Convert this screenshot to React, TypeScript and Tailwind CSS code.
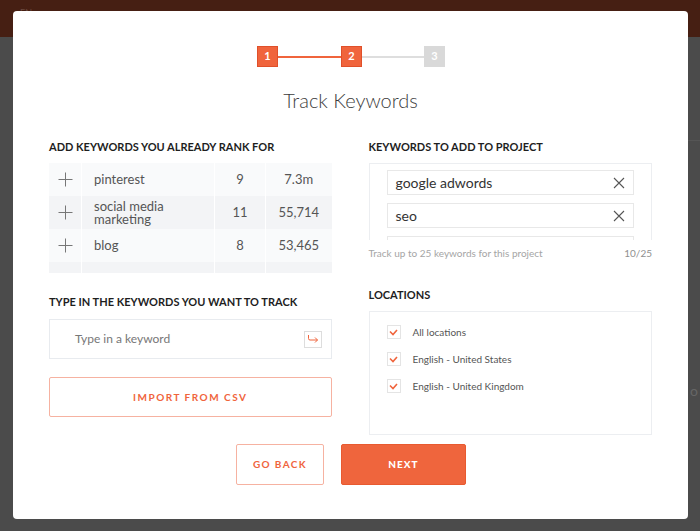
import React from 'react';

const rows = [
  { kw: 'pinterest', rank: '9', vol: '7.3m' },
  { kw: 'social media marketing', rank: '11', vol: '55,714' },
  { kw: 'blog', rank: '8', vol: '53,465' },
];

const PlusIcon = () => (
  <svg width="15" height="15" viewBox="0 0 15 15" className="text-[#777]">
    <path d="M7.5 0.5v14M0.5 7.5h14" stroke="currentColor" strokeWidth="1" fill="none" />
  </svg>
);

const CloseIcon = () => (
  <svg width="12" height="12" viewBox="0 0 12 12" className="text-[#555]">
    <path d="M1 1l10 10M11 1L1 11" stroke="currentColor" strokeWidth="1.1" fill="none" />
  </svg>
);

const Check = () => (
  <span className="w-[14px] h-[14px] border border-[#e4e4e4] flex items-center justify-center bg-white">
    <svg width="9" height="7" viewBox="0 0 9 7">
      <path d="M1 2.5l3 3 4-4.5" stroke="#f0643c" strokeWidth="1.6" fill="none" />
    </svg>
  </span>
);

const Heading = ({ children }: { children: React.ReactNode }) => (
  <h3 className="text-[11px] font-bold text-[#1e1e1e] uppercase leading-[12px]">{children}</h3>
);

export default function App() {
  return (
    <div className="relative w-[700px] h-[531px] overflow-hidden bg-[#4b4b4b] font-['Lato','Liberation_Sans',sans-serif]">
      {/* page behind the modal */}
      <div className="h-[37px] bg-[#461f13]" />
      <div className="absolute left-[20px] top-[6px] text-[9px] text-[#6b4a40]">EN</div>
      <div className="absolute left-[688px] top-[140px] w-[12px] h-px bg-[#555]" />
      <div className="absolute left-[690px] top-[380px] text-[14px] text-[#666]">o</div>

      {/* modal */}
      <div className="absolute left-[13px] top-[11px] w-[675px] h-[508px] bg-white rounded-[4px] px-[36px] pt-[35px]">
        {/* steps */}
        <div className="flex items-center justify-center pl-[1px]">
          <span className="w-[21px] h-[21px] bg-[#f0643c] border border-[#e0502a] text-white text-[11px] font-bold flex items-center justify-center">1</span>
          <span className="w-[63px] h-[2px] bg-[#f0643c]" />
          <span className="w-[21px] h-[21px] bg-[#f0643c] border border-[#e0502a] text-white text-[11px] font-bold flex items-center justify-center">2</span>
          <span className="w-[62px] h-[2px] bg-[#dedede]" />
          <span className="w-[21px] h-[21px] bg-[#d9d9d9] text-white text-[11px] font-bold flex items-center justify-center">3</span>
        </div>
        <h1 className="text-center text-[20px] font-light text-[#3c3c3c] mt-[21px] leading-[24px]">Track Keywords</h1>

        <div className="flex gap-[37px] mt-[29px]">
          {/* left column */}
          <div className="w-[283px] flex flex-col">
            <Heading>Add keywords you already rank for</Heading>
            <div className="mt-[10px] h-[110px] overflow-hidden flex flex-col">
              {rows.map((r, i) => (
                <div key={r.kw} className={`flex h-[33px] shrink-0 ${i % 2 === 1 ? 'bg-[#f3f4f6]' : 'bg-[#f9fafb]'} text-[13px] text-[#555] leading-[13px]`}>
                  <div className="w-[33px] flex items-center justify-center border-r border-white"><PlusIcon /></div>
                  <div className="w-[133px] flex items-center pl-[12px] pr-2 border-r border-white">{r.kw}</div>
                  <div className="w-[51px] flex items-center justify-center border-r border-white">{r.rank}</div>
                  <div className="flex-1 flex items-center justify-center">{r.vol}</div>
                </div>
              ))}
              <div className="flex h-[33px] shrink-0 bg-[#f3f4f6]">
                <div className="w-[33px] border-r border-white" />
                <div className="w-[133px] border-r border-white" />
                <div className="w-[51px] border-r border-white" />
              </div>
            </div>

            <div className="mt-[23px]"><Heading>Type in the keywords you want to track</Heading></div>
            <div className="mt-[11px] h-[40px] border border-[#e8ebef] flex items-center pl-[25px] pr-[9px]">
              <span className="flex-1 text-[12px] text-[#777]">Type in a keyword</span>
              <span className="w-[18px] h-[17px] border border-[#ddd] flex items-center justify-center">
                <svg width="12" height="10" viewBox="0 0 12 10">
                  <path d="M1.5 1v3.5q0 1.5 1.5 1.5h7.5M8 3.5l2.5 2.5L8 8.5" stroke="#f0643c" strokeWidth="1" fill="none" />
                </svg>
              </span>
            </div>
            <button className="mt-[18px] h-[40px] border border-[#f6b2a1] rounded-[2px] text-[#f0643c] text-[10px] font-bold tracking-[1.5px] uppercase">
              Import from CSV
            </button>
          </div>

          {/* right column */}
          <div className="w-[284px] flex flex-col">
            <Heading>Keywords to add to project</Heading>
            <div className="mt-[10px] h-[77px] overflow-hidden border border-[#eceef1] border-b-0 px-[17px] pt-[6px] flex flex-col gap-[8px]">
              {['google adwords', 'seo', ''].map((k, i) => (
                <div key={i} className="h-[25px] shrink-0 border border-[#e8e8e8] flex items-center pl-[8px] pr-[8px]">
                  <span className="flex-1 text-[14px] text-[#333] leading-none">{k}</span>
                  {k && <CloseIcon />}
                </div>
              ))}
            </div>
            <div className="mt-[7px] flex justify-between text-[10px] leading-[12px] text-[#a5a5a5]">
              <span>Track up to 25 keywords for this project</span>
              <span className="text-[#8f8f8f]">10/25</span>
            </div>

            <div className="mt-[30px]"><Heading>Locations</Heading></div>
            <div className="mt-[10px] h-[124px] border border-[#eceef1] pt-[13px] pl-[17px] flex flex-col gap-[13px]">
              {['All locations', 'English - United States', 'English - United Kingdom'].map((l) => (
                <label key={l} className="flex items-center gap-[12px] text-[10px] text-[#555] leading-[14px]">
                  <Check />
                  {l}
                </label>
              ))}
            </div>
          </div>
        </div>

        {/* footer buttons */}
        <div className="flex justify-center gap-[17px] mt-[9px] pl-[1px]">
          <button className="w-[88px] h-[41px] border border-[#f6b2a1] rounded-[2px] text-[#f0643c] text-[10px] font-bold tracking-[1.4px]">GO BACK</button>
          <button className="w-[125px] h-[41px] bg-[#ef653d] border border-[#e85a30] rounded-[2px] text-white text-[10px] font-black tracking-[1px]">NEXT</button>
        </div>
      </div>
    </div>
  );
}
